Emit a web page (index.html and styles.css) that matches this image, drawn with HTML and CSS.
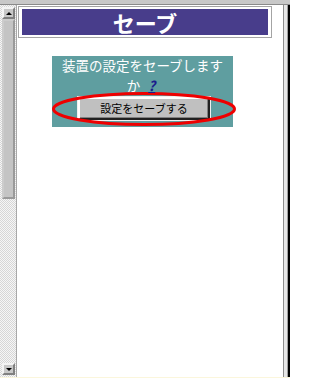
FILE: index.html
```html
<!DOCTYPE html>
<html lang="ja">
<head>
<meta charset="utf-8">
<title>セーブ</title>
<link rel="stylesheet" href="styles.css">
</head>
<body>
<div class="window">
  <div class="topbar"></div>
  <div class="middle">
    <div class="scrollbar">
      <div class="sb-btn"><span class="tri-up"></span></div>
      <div class="sb-thumb"></div>
      <div class="sb-track"></div>
      <div class="sb-btn"><span class="tri-down"></span></div>
    </div>
    <div class="content">
      <div class="title-frame">
        <div class="title">セーブ</div>
      </div>
      <div class="panel">
        <div class="question">
          <div class="q-line">装置の設定をセーブします</div>
          <div class="q-line"><span>か</span><a class="help" href="#">?</a></div>
        </div>
        <button class="save-btn" type="button">設定をセーブする</button>
        <svg class="mark" width="186" height="35" viewBox="0 0 186 35">
          <ellipse cx="92" cy="17" rx="90.5" ry="15.5" fill="none" stroke="#ee0000" stroke-width="3"/>
        </svg>
      </div>
    </div>
    <div class="right-edge"></div>
  </div>
  <div class="bottomline"></div>
</div>
</body>
</html>
```

FILE: styles.css
```css
html, body {
  margin: 0;
  padding: 0;
  background: #ffffff;
}

body {
  width: 290px;
  height: 378px;
  overflow: hidden;
  font-family: "Noto Sans CJK JP", "Noto Sans", sans-serif;
}

.window {
  display: flex;
  flex-direction: column;
  width: 290px;
  height: 378px;
}

.topbar {
  height: 4px;
  background: #c8c8c8;
  border-bottom: 1px solid #8a8a8a;
  flex: none;
}

.middle {
  flex: 1;
  display: flex;
  min-height: 0;
}

.scrollbar {
  width: 13px;
  flex: none;
  display: flex;
  flex-direction: column;
  padding: 2px 1px 2px 2px;
  background: repeating-conic-gradient(#d6d6d6 0 25%, #f6f6f6 0 50%) 0 0 / 2px 2px;
  border-right: 1px solid #a8a8a8;
}

.sb-btn {
  height: 8px;
  flex: none;
  background: #c8c8c8;
  border: 2px solid;
  border-color: #f4f4f4 #808080 #808080 #f4f4f4;
  display: flex;
  align-items: center;
  justify-content: center;
}

.tri-up {
  width: 0;
  height: 0;
  border-left: 3px solid transparent;
  border-right: 3px solid transparent;
  border-bottom: 3px solid #000;
}

.tri-down {
  width: 0;
  height: 0;
  border-left: 3px solid transparent;
  border-right: 3px solid transparent;
  border-top: 3px solid #000;
}

.sb-thumb {
  height: 176px;
  flex: none;
  background: #c4c4c4;
  border: 2px solid;
  border-color: #cccccc #9a9a9a #9a9a9a #cccccc;
}

.sb-track {
  flex: 1;
}

.content {
  flex: 1;
  background: #ffffff;
  padding: 1px 0 0 1px;
}

.title-frame {
  width: 246px;
  border: 1px solid #a4a4a4;
  padding: 2px 3px;
  background: #ffffff;
}

.title {
  background: #483d8b;
  color: #ffffff;
  font-weight: bold;
  font-size: 22px;
  line-height: 26px;
  text-align: center;
}

.panel {
  position: relative;
  width: 181px;
  margin: 18px 0 0 34px;
  padding: 0 0 7px;
  background: #5f9ea0;
}

.question {
  position: relative;
  z-index: 1;
  color: #ffffff;
  font-size: 13.5px;
  line-height: 19.6px;
}

.q-line {
  display: flex;
  justify-content: center;
  gap: 4px;
}

.help {
  padding: 0 3px 0 4px;
  color: #1c1c8c;
  font-weight: bold;
  font-style: italic;
  text-decoration: underline;
}

.save-btn {
  display: block;
  width: 132px;
  height: 23px;
  margin: 2px 0 0 26px;
  padding: 0;
  background: #c0c0c0;
  border: 2px solid;
  border-color: #ffffff #202020 #202020 #ffffff;
  box-shadow: inset -1px -1px 0 #808080, 0 0 0 1px #f0f0f0;
  font-family: "Noto Sans CJK JP", "Noto Sans", sans-serif;
  font-size: 11px;
  line-height: 17px;
  color: #000000;
}

.mark {
  position: absolute;
  left: 0;
  top: 36px;
  overflow: visible;
}

.right-edge {
  width: 6px;
  flex: none;
  border-left: 1px solid #8c8c8c;
  background: linear-gradient(to right, #e6e6e6 0 3px, #a0a0a0 3px 4px, #000000 4px 6px);
}

.bottomline {
  height: 1px;
  flex: none;
  background: #fbf6dc;
}
```
